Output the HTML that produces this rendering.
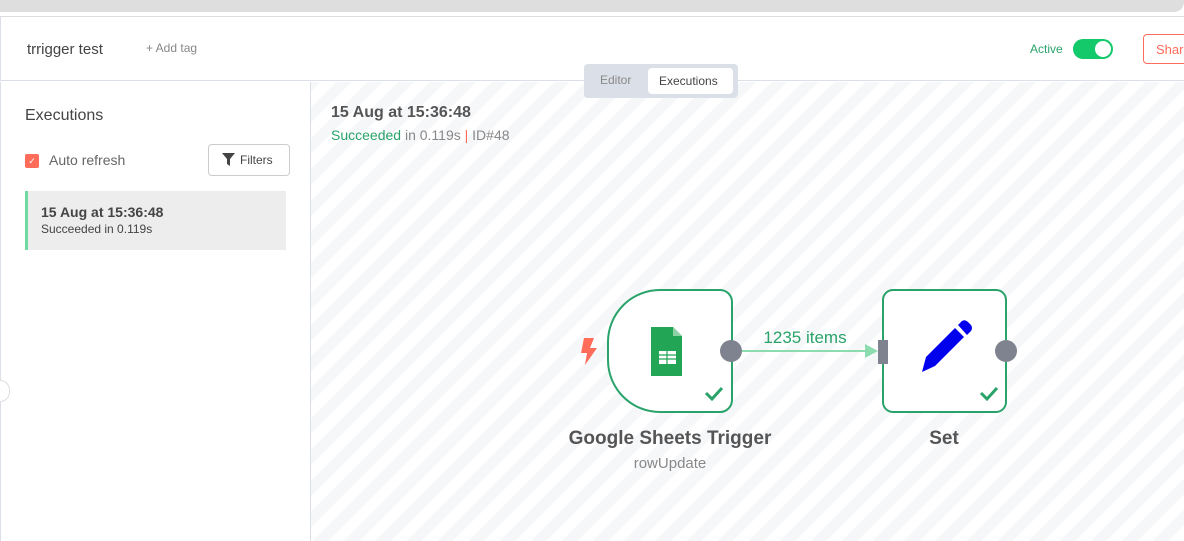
<!DOCTYPE html>
<html><head><meta charset="utf-8"><style>
*{box-sizing:border-box;margin:0;padding:0}
body{width:1184px;height:541px;overflow:hidden;font-family:"Liberation Sans",sans-serif;background:#fff;position:relative;color:#555}
.top{position:absolute;left:0;top:0;width:1184px;height:12px;background:#dedede;border-bottom-right-radius:10px}
.topline{position:absolute;left:0;top:16px;width:1184px;height:1px;background:#ddd}
.hdr{position:absolute;left:0;top:17px;width:1184px;height:64px;border-bottom:1px solid #dbdfe7;border-left:1px solid #dbdfe7}
.canvas{position:absolute;left:311px;top:82px;right:0;bottom:0;background:repeating-linear-gradient(-45deg,#fff 0 11px,#f6f7f9 11px 22px)}
.left{position:absolute;left:0;top:82px;width:311px;bottom:0;border-right:1px solid #dbdfe7;border-left:1px solid #dbdfe7;background:#fff}
.abs{position:absolute;white-space:nowrap}
</style></head><body>
<div class="top"></div><div class="topline"></div>
<div class="hdr"></div>
<div class="abs" style="left:27px;top:41px;font-size:15px;color:#444">trrigger test</div>
<div class="abs" style="left:146px;top:41px;font-size:12px;color:#888">+ Add tag</div>
<div class="abs" style="left:1030px;top:42px;font-size:12px;color:#29a36a">Active</div>
<div class="abs" style="left:1073px;top:39px;width:40px;height:20px;border-radius:10px;background:#13c96a"><div style="position:absolute;right:2px;top:2px;width:16px;height:16px;border-radius:50%;background:#fff"></div></div>
<div class="abs" style="left:1143px;top:34px;width:60px;height:30px;border:1px solid #ff6d5a;border-radius:4px;color:#ff6d5a;font-size:13px;padding:7px 0 0 12px">Share</div>
<div class="canvas"></div>
<div class="left"></div>
<div class="abs" style="left:584px;top:64px;width:154px;height:34px;background:#dbdfe7;border-radius:4px"></div>
<div class="abs" style="left:600px;top:73px;font-size:12px;color:#888">Editor</div>
<div class="abs" style="left:648px;top:68px;width:85px;height:26px;background:#fff;border-radius:4px;font-size:12px;color:#444;padding:6px 0 0 11px">Executions</div>
<div class="abs" style="left:25px;top:107px;font-size:16px;color:#444">Executions</div>
<div class="abs" style="left:25px;top:154px;width:14px;height:14px;background:#ff6d5a;border-radius:2px;color:#fff;font-size:9px;text-align:center;line-height:14px">✓</div>
<div class="abs" style="left:49px;top:152px;font-size:14px;color:#666">Auto refresh</div>
<div class="abs" style="left:208px;top:144px;width:82px;height:32px;border:1px solid #ccc;border-radius:4px;font-size:12px;color:#444;padding:8px 0 0 13px"><svg width="13" height="13" viewBox="0 0 13 13" style="vertical-align:-2px;margin-right:5px"><path d="M0 0H13L8 6V13L5 11V6Z" fill="#444"/></svg>Filters</div>
<div class="abs" style="left:25px;top:191px;width:261px;height:59px;background:#ededed;border-left:3px solid #6fdba0"></div>
<div class="abs" style="left:41px;top:204px;font-size:14px;font-weight:bold;color:#444">15 Aug at 15:36:48</div>
<div class="abs" style="left:41px;top:222px;font-size:12px;color:#444">Succeeded in 0.119s</div>
<div class="abs" style="left:0;top:380px;width:10px;height:22px;border:1px solid #ddd;border-left:none;border-radius:0 11px 11px 0;background:#fff"></div>
<div class="abs" style="left:331px;top:104px;font-size:16px;font-weight:bold;color:#555">15 Aug at 15:36:48</div>
<div class="abs" style="left:331px;top:127px;font-size:14px;color:#888"><span style="color:#29a36a">Succeeded</span> in 0.119s <span style="color:#ff6d5a">|</span> ID#48</div>
<svg class="abs" style="left:560px;top:280px" width="480" height="200">
<path d="M24 58 L34 58 L30 68 L37 68 L25 85 L27 73 L21 73Z" fill="#ff6d5a"/>
<path d="M100 10 H160 A12 12 0 0 1 172 22 V120 A12 12 0 0 1 160 132 H100 A52 52 0 0 1 48 80 V62 A52 52 0 0 1 100 10Z" fill="#fff" stroke="#29a36a" stroke-width="2"/>
<path d="M91 47 H113 L122 56 V96 H91Z" fill="#23a556"/><path d="M113 47 L122 56 H113Z" fill="#8ed1a4"/>
<rect x="99" y="71" width="17" height="13" fill="#fff"/><path d="M99 75H116M99 79H116M107 71V84" stroke="#23a556" stroke-width="1.2"/>
<path d="M146 113 L152 119 L162 108" stroke="#29a36a" stroke-width="3" fill="none"/>
<circle cx="171" cy="71" r="11" fill="#7f838f"/>
<line x1="182" y1="71" x2="310" y2="71" stroke="#8ddcb0" stroke-width="2"/><path d="M305 64 L318 71 L305 78Z" fill="#8ddcb0"/>
<text x="245" y="63" text-anchor="middle" font-size="17" fill="#29a36a" font-family="Liberation Sans">1235 items</text>
<rect x="323" y="10" width="123" height="122" rx="10" fill="#fff" stroke="#29a36a" stroke-width="2"/>
<rect x="318" y="60" width="10" height="24" fill="#7f838f"/>
<circle cx="446" cy="71" r="11" fill="#7f838f"/>
<path d="M362 92 L366 77 L395 48 L404 57 L375 86Z" fill="#0000ee"/><path d="M398 45 L402 41 Q405 39 408 42 L411 45 Q413 48 411 51 L407 55Z" fill="#0000ee"/>
<path d="M421 113 L427 119 L437 108" stroke="#29a36a" stroke-width="3" fill="none"/>
<text x="110" y="164" text-anchor="middle" font-size="19" font-weight="bold" fill="#555" font-family="Liberation Sans">Google Sheets Trigger</text>
<text x="110" y="188" text-anchor="middle" font-size="15" fill="#888" font-family="Liberation Sans">rowUpdate</text>
<text x="384" y="164" text-anchor="middle" font-size="19" font-weight="bold" fill="#555" font-family="Liberation Sans">Set</text>
</svg>
</body></html>
